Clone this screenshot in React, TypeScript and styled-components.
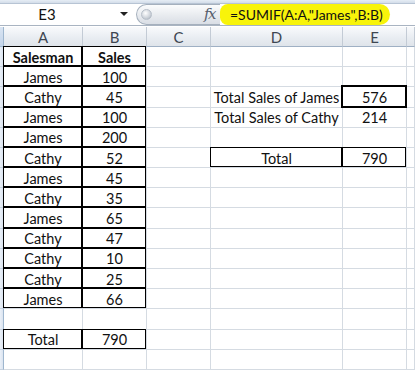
import React from "react";
import styled, { createGlobalStyle, css } from "styled-components";

const Global = createGlobalStyle`
  html, body { margin: 0; padding: 0; background: #fff; overflow: hidden; }
  body { font-family: Lato, "Open Sans", "Liberation Sans", sans-serif; }
  * { box-sizing: border-box; }
`;

const Page = styled.div`
  width: 415px;
  height: 370px;
  overflow: hidden;
  display: flex;
  flex-direction: column;
  background: #fff;
`;

const RibbonEdge = styled.div`
  height: 4px;
  background: linear-gradient(#e6edf5, #d3dde9);
  border-bottom: 1px solid #b7c4d4;
`;

const FormulaBar = styled.div`
  height: 25px;
  display: flex;
  align-items: stretch;
  border-bottom: 1px solid #a9b4c2;
  margin-bottom: 1px;
`;

const NameBox = styled.div`
  width: 134px;
  display: flex;
  align-items: center;
  background: #fff;
  font-size: 15px;
  color: #111;
`;

const NameText = styled.span`
  width: 94px;
  text-align: center;
`;

const DropArrow = styled.span`
  margin-left: 26px;
  width: 0;
  height: 0;
  border-left: 4px solid transparent;
  border-right: 4px solid transparent;
  border-top: 4px solid #222;
`;

const FxPill = styled.div`
  width: 84px;
  margin: 0 0 0 2px;
  border: 1px solid #a5b0bd;
  border-right: none;
  border-radius: 12px 0 0 12px;
  background: linear-gradient(#fbfcfd, #e8ebef 55%, #d9dee5);
  display: flex;
  align-items: center;
  justify-content: space-between;
  padding: 0 3px 0 4px;
`;

const Knob = styled.span`
  width: 11px;
  height: 11px;
  border-radius: 50%;
  background: radial-gradient(circle at 40% 35%, #ffffff, #c8ced6 65%, #9aa3ae);
  border: 1px solid #b7bfc9;
`;

const Fx = styled.span`
  font-family: "DejaVu Serif", "Liberation Serif", serif;
  font-style: italic;
  font-size: 15px;
  color: #56606d;
  letter-spacing: -1.5px;
  padding-right: 2px;
`;

const FormulaArea = styled.div`
  flex: 1;
  background: #fff;
  display: flex;
  align-items: stretch;
`;

const Highlight = styled.div`
  width: 170px;
  background: #f8f40a;
  border-radius: 9px 12px 12px 9px;
  display: flex;
  align-items: center;
  padding-left: 10px;
  font-size: 14px;
  color: #111;
  white-space: nowrap;
`;

const COLS = "4px 79px 64px 64px 132px 64px 1fr";

const HeaderRow = styled.div`
  display: grid;
  grid-template-columns: ${COLS};
  height: 22px;
`;

const Corner = styled.div`
  background: linear-gradient(#d9e4f2, #c4d5ea);
  border-right: 1px solid #9eb6ce;
  border-bottom: 1px solid #9eb6ce;
`;

const ColHead = styled.div`
  background: linear-gradient(#f9fafc, #e9edf2 55%, #dfe4ea);
  border-right: 1px solid #c3cbd5;
  border-bottom: 1px solid #9fb0c4;
  display: flex;
  align-items: center;
  justify-content: center;
  font-size: 15px;
  color: #3e4651;
`;

const Sheet = styled.div`
  display: grid;
  grid-template-columns: ${COLS};
  grid-auto-rows: 20.2px;
`;

const RowHead = styled.div`
  background: linear-gradient(90deg, #eaf0f8, #dbe4f0);
  border-right: 1px solid #9eb6ce;
  border-bottom: 1px solid #c6d2e0;
`;

const Cell = styled.div<{ $boxed?: boolean; $bold?: boolean; $selected?: boolean }>`
  border-right: 1px solid #d5dbe2;
  border-bottom: 1px solid #d5dbe2;
  display: flex;
  align-items: center;
  justify-content: center;
  padding-top: 1px;
  font-size: 14.5px;
  color: #111;
  font-weight: ${(p) => (p.$bold ? 700 : 400)};
  white-space: nowrap;
  ${(p) =>
    (p.$boxed || p.$selected) &&
    css`
      position: relative;
    `}
  ${(p) =>
    p.$boxed &&
    css`
      &::before {
        content: "";
        position: absolute;
        top: -1px;
        left: -1px;
        right: 0;
        bottom: 0;
        border: 1px solid #000;
        pointer-events: none;
      }
    `}
  ${(p) =>
    p.$selected &&
    css`
      &::after {
        content: "";
        position: absolute;
        top: -2px;
        left: -2px;
        right: -1px;
        bottom: -1px;
        border: 2px solid #000;
        pointer-events: none;
      }
    `}
`;

type CellData = { text?: string; boxed?: boolean; bold?: boolean; selected?: boolean };
type RowData = { A?: CellData; B?: CellData; C?: CellData; D?: CellData; E?: CellData };

const sales: [string, number][] = [
  ["James", 100],
  ["Cathy", 45],
  ["James", 100],
  ["James", 200],
  ["Cathy", 52],
  ["James", 45],
  ["Cathy", 35],
  ["James", 65],
  ["Cathy", 47],
  ["Cathy", 10],
  ["Cathy", 25],
  ["James", 66],
];

const rows: RowData[] = [
  { A: { text: "Salesman", boxed: true, bold: true }, B: { text: "Sales", boxed: true, bold: true } },
  ...sales.map(([n, v]) => ({ A: { text: n, boxed: true }, B: { text: String(v), boxed: true } })),
  {},
  { A: { text: "Total", boxed: true }, B: { text: "790", boxed: true } },
  {},
];

rows[2] = { ...rows[2], D: { text: "Total Sales of James" }, E: { text: "576", selected: true } };
rows[3] = { ...rows[3], D: { text: "Total Sales of Cathy" }, E: { text: "214" } };
rows[5] = { ...rows[5], D: { text: "Total", boxed: true }, E: { text: "790", boxed: true } };

const colKeys: (keyof RowData)[] = ["A", "B", "C", "D", "E"];

export default function App() {
  return (
    <Page>
      <Global />
      <RibbonEdge />
      <FormulaBar>
        <NameBox>
          <NameText>E3</NameText>
          <DropArrow />
        </NameBox>
        <FxPill>
          <Knob />
          <Fx>fx</Fx>
        </FxPill>
        <FormulaArea>
          <Highlight>=SUMIF(A:A,"James",B:B)</Highlight>
        </FormulaArea>
      </FormulaBar>
      <HeaderRow>
        <Corner />
        {["A", "B", "C", "D", "E", ""].map((c, i) => (
          <ColHead key={i}>{c}</ColHead>
        ))}
      </HeaderRow>
      <Sheet>
        {rows.map((r, ri) => (
          <React.Fragment key={ri}>
            <RowHead />
            {colKeys.map((k) => {
              const d = r[k];
              return (
                <Cell key={k} $boxed={d?.boxed} $bold={d?.bold} $selected={d?.selected}>
                  {d?.text}
                </Cell>
              );
            })}
            <Cell />
          </React.Fragment>
        ))}
      </Sheet>
    </Page>
  );
}
